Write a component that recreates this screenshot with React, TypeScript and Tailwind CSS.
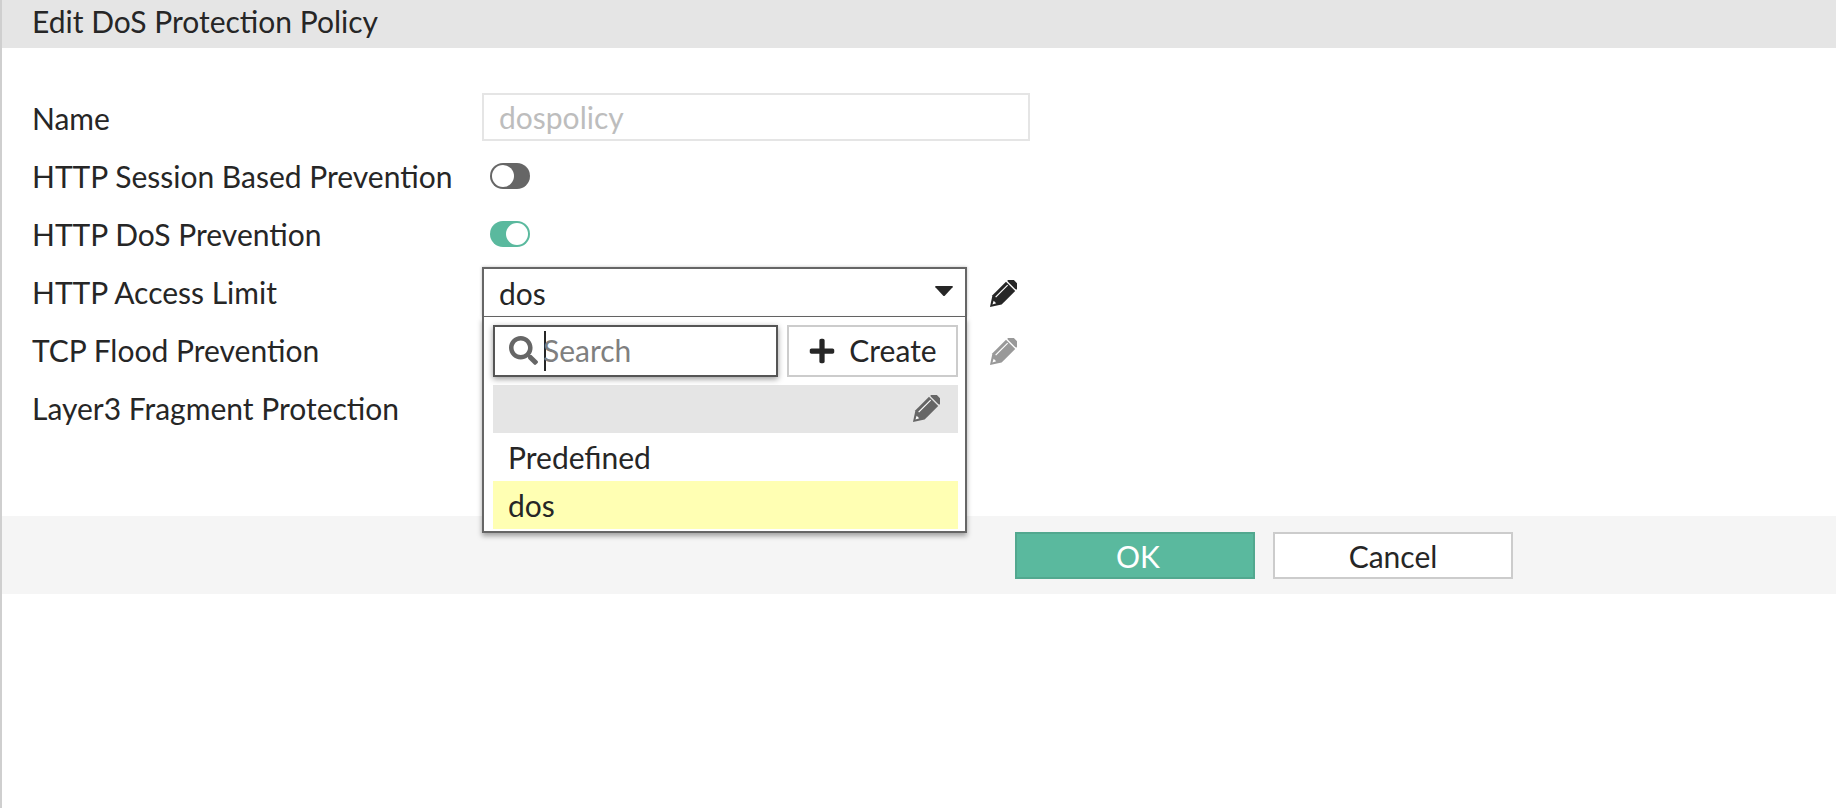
import { FaSearch, FaPlus } from 'react-icons/fa';

function Pencil({ className }: { className: string }) {
  return (
    <svg viewBox="0 0 30 30" className={className}>
      <g transform="rotate(45 15 15)">
        <rect x="8.500" y="-4" width="13" height="5.500" rx="1.400" fill="currentColor" />
        <path d="M8.500 2.800h13V22L15 32 8.500 22z" fill="currentColor" />
        <path d="M12 4v17" stroke="white" strokeWidth="1.200" />
        <path d="M13.200 25h3.600L15 28.500z" fill="white" />
      </g>
    </svg>
  );
}

function Toggle({ on }: { on?: boolean }) {
  return (
    <div
      className={`w-[40px] h-[26px] mt-[1px] rounded-full flex items-center p-[2px] ${
        on ? 'bg-[#5ab99e] justify-end' : 'bg-[#666666] justify-start'
      }`}
    >
      <div className="w-[22px] h-[22px] rounded-full bg-white" />
    </div>
  );
}

function Row({ label, children }: { label: string; children?: React.ReactNode }) {
  return (
    <div className="flex items-center h-[58px]">
      <div className="w-[450px] shrink-0 pt-[2px]">{label}</div>
      {children}
    </div>
  );
}

export default function App() {
  return (
    <div className="h-screen flex flex-col bg-white border-l-2 border-[#cfcfcf] text-[30px] text-[#262626] font-['Lato',sans-serif] overflow-hidden">
      <div className="h-[48px] shrink-0 bg-[#e5e5e5] pl-[30px] pb-[6px] flex items-center">Edit DoS Protection Policy</div>

      <div className="pl-[30px] pt-[40px] h-[468px] shrink-0">
        <Row label="Name">
          <div className="w-[548px] h-[48px] border-2 border-[#e5e5e5] pl-[15px] flex items-center text-[#bdbdbd]">dospolicy</div>
        </Row>
        <Row label="HTTP Session Based Prevention">
          <div className="ml-[8px]"><Toggle /></div>
        </Row>
        <Row label="HTTP DoS Prevention">
          <div className="ml-[8px]"><Toggle on /></div>
        </Row>
        <Row label="HTTP Access Limit">
          <div className="relative w-[485px] h-[49px] z-10">
            <div className="h-[50px] border-2 border-b border-[#666666] bg-white pl-[15px] pr-[11px] pt-[2px] flex items-center justify-between shadow-[0_0_3px_rgba(0,0,0,0.25)]">
              <span>dos</span>
              <svg viewBox="0 0 20 12" className="w-[20px] h-[12px] mb-[4px] text-[#262626]">
                <path d="M2 1h16q1.500 0 .6 1.300L11 10.500q-1 1-2 0L1.400 2.300Q.5 1 2 1z" fill="currentColor" />
              </svg>
            </div>
            <div className="absolute top-[50px] left-0 w-[485px] h-[216px] bg-white border-2 border-t-0 border-[#666666] pl-[9px] pr-[7px] pt-[8px] shadow-[0_3px_5px_rgba(0,0,0,0.35)]">
              <div className="flex justify-between h-[52px]">
                <div className="w-[285px] h-full border-2 border-[#555555] flex items-center pl-[14px] relative shadow-[0_2px_6px_rgba(0,0,0,0.4)]">
                  <FaSearch className="w-[29px] h-[29px] text-[#666666] shrink-0" />
                  <span className="ml-[6px] w-[2px] h-[40px] bg-[#262626] shrink-0" />
                  <span className="-ml-[3px] text-[#7f7f7f]">Search</span>
                </div>
                <div className="w-[171px] h-full border-2 border-[#cccccc] flex items-center justify-center gap-[13px]">
                  <FaPlus className="w-[28px] h-[28px] text-[#262626]" />
                  <span>Create</span>
                </div>
              </div>
              <div className="mt-[8px] h-[48px] bg-[#e5e5e5] flex items-center justify-end pr-[18px]">
                <Pencil className="w-[30px] h-[30px] mt-[2px] text-[#666666]" />
              </div>
              <div className="h-[48px] flex items-center pl-[15px] pt-[2px]">Predefined</div>
              <div className="h-[48px] flex items-center pl-[15px] pt-[2px] bg-[#ffffb3]">dos</div>
            </div>
          </div>
          <Pencil className="w-[30px] h-[30px] ml-[20px] mt-[7px] text-[#262626]" />
        </Row>
        <Row label="TCP Flood Prevention">
          <div className="w-[485px] shrink-0" />
          <Pencil className="w-[30px] h-[30px] ml-[20px] mt-[7px] text-[#999999]" />
        </Row>
        <Row label="Layer3 Fragment Protection" />
      </div>

      <div className="h-[78px] shrink-0 bg-[#f5f5f5] pt-[16px] pl-[1013px] flex items-start gap-[18px]">
        <button className="w-[240px] h-[47px] pl-[6px] pb-[6px] bg-[#5ab99e] border-2 border-[#52a88f] text-white">OK</button>
        <button className="w-[240px] h-[47px] pb-[6px] bg-white border-2 border-[#cccccc]">Cancel</button>
      </div>
    </div>
  );
}
